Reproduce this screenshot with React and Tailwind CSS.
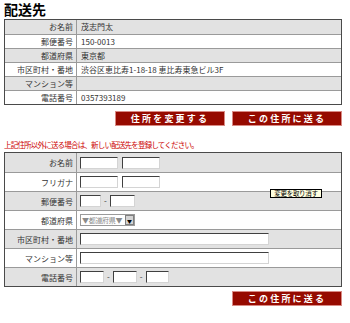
const font = { fontFamily: '"Noto Sans CJK JP", "Noto Sans", sans-serif' }

const saved = [
  ['お名前', '茂志門太'],
  ['郵便番号', '150-0013'],
  ['都道府県', '東京都'],
  ['市区町村・番地', '渋谷区恵比寿1-18-18 恵比寿東急ビル3F'],
  ['マンション等', ''],
  ['電話番号', '0357393189'],
]

function Box({ w }) {
  return (
    <span
      className="inline-block h-[12px] bg-white border border-t-[#404040] border-l-[#404040] border-b-[#d4d4d4] border-r-[#d4d4d4]"
      style={{ width: w }}
    />
  )
}

function Dash() {
  return <span className="text-[8px] text-[#333] px-[3px] leading-none">-</span>
}

function RedButton({ children }) {
  return (
    <button className="w-[110px] h-[15px] bg-[#960a00] border border-[#d98a84] text-white text-[9px] font-bold tracking-[2.2px] leading-none flex items-center justify-center">
      {children}
    </button>
  )
}

export default function App() {
  const rows = [
    ['お名前', <div className="flex gap-[4px]"><Box w={38} /><Box w={38} /></div>],
    ['フリガナ', <div className="flex gap-[4px]"><Box w={38} /><Box w={38} /></div>],
    ['郵便番号', <div className="flex items-center"><Box w={21} /><Dash /><Box w={25} /></div>],
    ['都道府県', (
      <div className="flex items-center h-[12px] w-[55px] border border-[#9a9a9a] bg-white">
        <span className="flex-1 text-[7px] text-[#8a8a8a] leading-none pl-[1px] tracking-[-0.3px] whitespace-nowrap">▼都道府県▼</span>
        <span className="w-[9px] h-[10px] bg-[#d4d4d4] border border-[#808080] flex items-center justify-center text-[5px] leading-none">▼</span>
      </div>
    )],
    ['市区町村・番地', <Box w={189} />],
    ['マンション等', <Box w={189} />],
    ['電話番号', <div className="flex items-center"><Box w={24} /><Dash /><Box w={24} /><Dash /><Box w={23} /></div>],
  ]

  return (
    <div className="relative w-[350px] h-[323px] bg-white text-black" style={font}>
      <div className="pl-[4px] w-[342px]">
        <h1 className="text-[14px] font-bold leading-[17px] pt-[1px] h-[19px]">配送先</h1>

        {/* saved address */}
        <div className="border border-[#4a4a4a] flex flex-col">
          {saved.map(([k, v], i) => (
            <div
              key={k}
              className={`flex h-[14px] ${i > 0 ? 'border-t border-[#9a9a9a]' : ''} ${i % 2 === 0 ? 'bg-[#e2e2e2]' : 'bg-white'}`}
            >
              <div className="w-[72px] border-r border-[#9a9a9a] text-right pr-[3px] text-[8px] leading-[14px] text-[#333]">{k}</div>
              <div className="flex-1 pl-[4px] text-[8px] leading-[14px] text-[#333]">{v}</div>
            </div>
          ))}
        </div>

        <div className="flex justify-end gap-[7px] mt-[6px]">
          <RedButton>住所を変更する</RedButton>
          <RedButton>この住所に送る</RedButton>
        </div>

        <p className="text-[7.5px] text-[#cc0000] leading-[10px] mt-[14px] tracking-[-0.8px]">
          上記住所以外に送る場合は、新しい配送先を登録してください。
        </p>

        {/* new address */}
        <div className="border border-[#4a4a4a] flex flex-col mt-[2px]">
          {rows.map(([k, v], i) => (
            <div
              key={k}
              className={`flex h-[19px] ${i > 0 ? 'border-t border-[#9a9a9a]' : ''} ${i % 2 === 0 ? 'bg-[#e2e2e2]' : 'bg-white'}`}
            >
              <div className="w-[72px] border-r border-[#9a9a9a] text-right pr-[3px] text-[8px] leading-[19px] text-[#333]">{k}</div>
              <div className="flex-1 pl-[3px] flex items-center">{v}</div>
            </div>
          ))}
        </div>

        <div className="flex justify-end mt-[4px]">
          <RedButton>この住所に送る</RedButton>
        </div>
      </div>

      {/* tooltip */}
      <div className="absolute left-[270px] top-[189px] w-[52px] h-[9px] bg-[#ffffe1] border border-black text-[6.5px] leading-[7px] text-center tracking-[-0.3px]">
        変更を取り消す
      </div>
    </div>
  )
}
